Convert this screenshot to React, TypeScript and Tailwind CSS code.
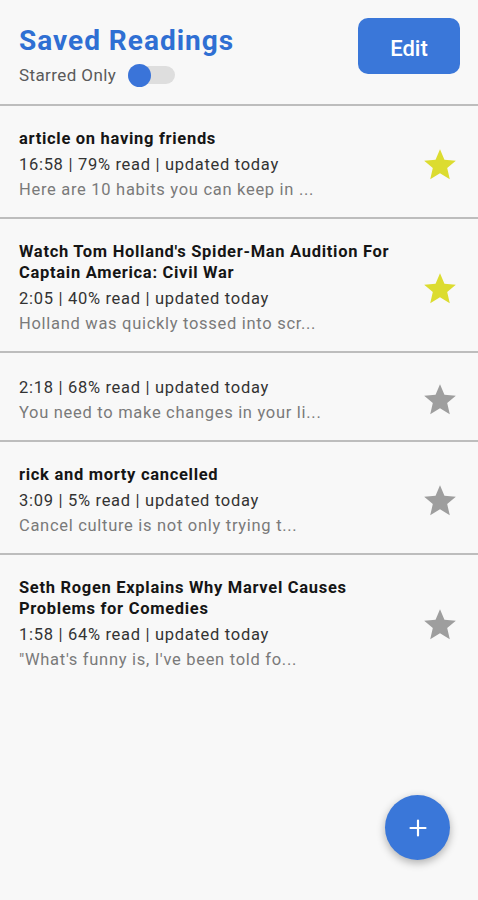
import { useState } from 'react'

type Reading = {
  title?: string
  length: string
  progress: number
  snippet: string
  starred: boolean
}

const READINGS: Reading[] = [
  {
    title: 'article on having friends',
    length: '16:58',
    progress: 79,
    snippet: 'Here are 10 habits you can keep in ...',
    starred: true,
  },
  {
    title: "Watch Tom Holland's Spider-Man Audition For Captain America: Civil War",
    length: '2:05',
    progress: 40,
    snippet: 'Holland was quickly tossed into scr...',
    starred: true,
  },
  {
    length: '2:18',
    progress: 68,
    snippet: 'You need to make changes in your li...',
    starred: false,
  },
  {
    title: 'rick and morty cancelled',
    length: '3:09',
    progress: 5,
    snippet: 'Cancel culture is not only trying t...',
    starred: false,
  },
  {
    title: 'Seth Rogen Explains Why Marvel Causes Problems for Comedies',
    length: '1:58',
    progress: 64,
    snippet: '"What\'s funny is, I\'ve been told fo...',
    starred: false,
  },
]

function Star({ on }: { on: boolean }) {
  return (
    <svg viewBox="0 0 24 24" className="h-[38px] w-[38px] shrink-0">
      <path
        d="M12 17.27L18.18 21l-1.64-7.03L22 9.24l-7.19-.61L12 2 9.19 8.63 2 9.24l5.46 4.73L5.82 21z"
        fill={on ? '#dcdc30' : '#9e9e9e'}
      />
    </svg>
  )
}

export default function App() {
  const [starredOnly, setStarredOnly] = useState(false)
  const items = starredOnly ? READINGS.filter((r) => r.starred) : READINGS

  return (
    <div className="relative min-h-[900px] w-full bg-[#f8f8f8] font-['Roboto',sans-serif]">
      {/* header */}
      <div className="flex items-start justify-between pl-[19px] pr-[18px] pt-[18px] h-[106px] border-b-2 border-[#bdbdbd]">
        <div className="pt-[7px]">
          <h1 className="text-[28px] leading-[32px] font-bold tracking-[1px] text-[#2f6fd3]">
            Saved Readings
          </h1>
          <div className="mt-[6px] flex items-center gap-[12px]">
            <span className="text-[17px] leading-[24px] tracking-[0.4px] text-[#5a5a5a]">Starred Only</span>
            <button
              onClick={() => setStarredOnly(!starredOnly)}
              className="relative h-[18px] w-[47px] rounded-full bg-[#dedede]"
            >
              <span
                className={
                  starredOnly
                    ? 'absolute -top-[2.5px] right-0 h-[23px] w-[23px] rounded-full bg-[#3a74d9]'
                    : 'absolute -top-[2.5px] left-0 h-[23px] w-[23px] rounded-full bg-[#3a74d9]'
                }
              />
            </button>
          </div>
        </div>
        <button className="h-[56px] w-[102px] rounded-[10px] bg-[#3a77d9] pt-[4px] text-[22px] font-medium text-white">
          Edit
        </button>
      </div>

      {/* list */}
      <div>
        {items.map((r, i) => (
          <div
            key={i}
            className={
              i < items.length - 1
                ? 'flex items-center justify-between pl-[19px] pr-[19px] pt-[22px] pb-[15px] border-b-2 border-[#bdbdbd]'
                : 'flex items-center justify-between pl-[19px] pr-[19px] pt-[22px] pb-[15px]'
            }
          >
            <div className="min-w-0 flex-1 pr-[20px] text-[16.5px] tracking-[0.7px]">
              {r.title && (
                <div className="mb-[3px] max-w-[380px] leading-[21px] font-bold text-[#151515]">
                  {r.title}
                </div>
              )}
              <div className="leading-[25px] text-[#333]">
                {r.length} | {r.progress}% read | updated today
              </div>
              <div className="leading-[25px] text-[#7a7a7a]">{r.snippet}</div>
            </div>
            <Star on={r.starred} />
          </div>
        ))}
      </div>

      {/* fab */}
      <button className="absolute bottom-[40px] right-[28px] flex h-[65px] w-[65px] items-center justify-center rounded-full bg-[#3a77d9] shadow-[0_3px_8px_rgba(0,0,0,0.3)]">
        <svg viewBox="0 0 24 24" className="h-[20px] w-[20px]">
          <path d="M12 3v18M3 12h18" stroke="white" strokeWidth="2.6" strokeLinecap="round" />
        </svg>
      </button>
    </div>
  )
}
